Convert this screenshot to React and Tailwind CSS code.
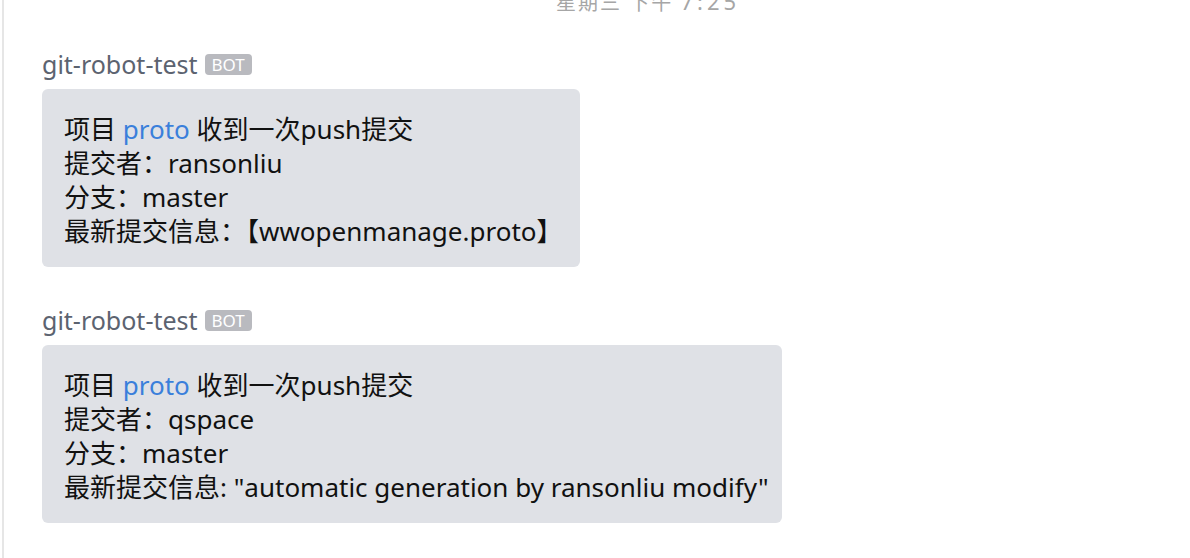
import React from "react";

const FONT = "font-['Noto_Sans','Noto_Sans_CJK_SC',sans-serif]";

function Message({ width, lines }) {
  return (
    <div className="flex flex-col">
      <div className="flex items-center h-[24px] gap-[7px]">
        <span className="text-[25px] leading-[24px] text-[#5c6370]">git-robot-test</span>
        <span className="flex items-center justify-center w-[47px] h-[21px] rounded-[4px] bg-[#b9babf] text-white text-[17px] leading-[21px]">
          BOT
        </span>
      </div>
      <div
        className={`mt-[13px] h-[178px] rounded-[6px] bg-[#dfe1e6] pl-[22px] pt-[23px] text-[26px] leading-[34px] text-[#111111] ${width}`}
      >
        {lines.map((l, i) => (
          <div key={i} className="whitespace-nowrap">
            {l}
          </div>
        ))}
      </div>
    </div>
  );
}

export default function App() {
  return (
    <div className={`w-[1190px] h-[558px] overflow-hidden bg-white flex ${FONT}`}>
      <div className="ml-[2px] w-[2px] h-full bg-[#e6e6e6]" />
      <div className="flex-1 flex flex-col pl-[38px]">
        <div className="-mt-[13px] h-[28px] leading-[28px] pl-[514px] text-[20px] tracking-[2px] text-[#a6a6a6] whitespace-nowrap">
          星期三 下午 <span className="text-[22px] tracking-[4px]">7:25</span>
        </div>
        <div className="mt-[37px]">
          <Message
            width="w-[538px]"
            lines={[
              <>
                项目 <span className="text-[#3a7fdb]">proto</span> 收到一次push提交
              </>,
              "提交者：ransonliu",
              "分支：master",
              "最新提交信息：【wwopenmanage.proto】",
            ]}
          />
        </div>
        <div className="mt-[41px]">
          <Message
            width="w-[740px]"
            lines={[
              <>
                项目 <span className="text-[#3a7fdb]">proto</span> 收到一次push提交
              </>,
              "提交者：qspace",
              "分支：master",
              '最新提交信息: "automatic generation by ransonliu modify"',
            ]}
          />
        </div>
      </div>
    </div>
  );
}
